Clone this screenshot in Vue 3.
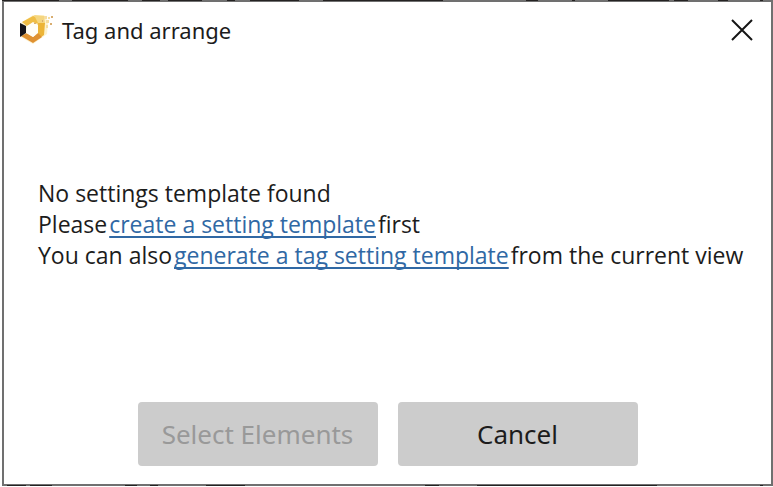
<script setup>
import { ref } from 'vue'

const open = ref(true)
const close = () => {
  open.value = false
}
</script>

<template>
  <section v-if="open" class="frame" role="dialog" aria-labelledby="dialog-title">
    <div class="dialog">
      <header class="titlebar">
        <svg class="logo" viewBox="0 0 36 32" aria-hidden="true">
          <path d="M1 9 L13 1 L24 1 L28 8 L27 20 L13 30 L1 23 Z" fill="#fbe9ae" opacity=".6" />
          <path d="M2 8 L13 2 L20 4 L21 10 L13 9 L7 12 Z" fill="#efbd45" />
          <path d="M14 1 L24 2 L25 9 L18 9 Z" fill="#f5d680" />
          <path d="M18 9 L25 9 L24 21 L18 25 L15 20 Z" fill="#ecb437" />
          <path d="M1 22 L7 19 L13 23 L18 19 L22 23 L13 29 Z" fill="#df9132" />
          <path d="M7 12 L13 8 L18 11 L18 19 L13 23 L6 19 Z" fill="#fffdf6" />
          <path d="M0 9 L6 12 L6 19 L0 23 Z" fill="#17151b" />
          <path d="M24 2h3v3h-3z M26 6h3v3h-3z M28 3h2v2h-2z M26 11h2v3h-2z" fill="#f6dda0" />
          <path d="M31 2h2v2h-2z M30 9h2v2h-2z M22 6h1v2h-1z M14 9h2v1h-2z" fill="#d8ad70" />
        </svg>
        <h1 id="dialog-title" class="title">Tag and arrange</h1>
        <button class="close" type="button" aria-label="Close" @click="close">
          <svg viewBox="0 0 22 22" aria-hidden="true">
            <path d="M1 1 L21 21 M21 1 L1 21" fill="none" stroke="#151515" stroke-width="2" />
          </svg>
        </button>
      </header>

      <main class="message">
        <p>No settings template found</p>
        <p>Please <a href="#create">create a setting template</a> first</p>
        <p>You can also <a href="#generate">generate a tag setting template</a> from the current view</p>
      </main>

      <footer class="actions">
        <button class="action" type="button" disabled>Select Elements</button>
        <button class="action" type="button" @click="close">Cancel</button>
      </footer>
    </div>
  </section>
</template>

<style>
body {
  background: #fff;
}
</style>

<style scoped>
.frame {
  box-sizing: border-box;
  display: flex;
  min-height: 100vh;
  padding: 0 0 1px 2px;
  font-family: "Noto Sans", "Open Sans", sans-serif;
  color: #1c1c1c;
}

.dialog {
  --edge: #707070;
  --ink: #242222;
  box-sizing: border-box;
  flex: 1;
  display: flex;
  flex-direction: column;
  padding: 2px;
  background:
    linear-gradient(90deg, var(--ink) 0 57px, transparent 0 70px, var(--ink) 0 126px, transparent 0 140px, var(--ink) 0 158px, transparent 0 166px, var(--ink) 0 200px, transparent 0 225px, var(--ink) 0 233px, transparent 0 248px, var(--ink) 0 297px, transparent 0 321px, var(--ink) 0 441px, transparent 0 524px, var(--ink) 0 536px, transparent 0 570px, var(--ink) 0 573px, transparent 0 606px, var(--ink) 0 667px, transparent 0 672px, var(--ink) 0 686px, transparent 0 716px, var(--ink) 0 726px, transparent 0 758px, var(--ink) 0 761px, transparent 0) top / 100% 1px no-repeat,
    linear-gradient(90deg, transparent 0 5px, var(--ink) 0 24px, transparent 0 28px, var(--ink) 0 50px, transparent 0 123px, var(--ink) 0 135px, transparent 0 148px, var(--ink) 0 156px, transparent 0 204px, var(--ink) 0 243px, transparent 0 423px, var(--ink) 0 437px, transparent 0 475px, var(--ink) 0 655px, transparent 0 758px, var(--ink) 0 761px, transparent 0) bottom / 100% 1px no-repeat,
    linear-gradient(#fff, #fff) center / calc(100% - 4px) calc(100% - 4px) no-repeat,
    var(--edge);
}

.titlebar {
  display: flex;
  align-items: center;
  height: 56px;
  padding: 0 18px 0 16px;
}

.logo {
  flex: none;
  width: 36px;
  height: 32px;
}

.title {
  flex: 1;
  margin: 0 0 0 6px;
  font-size: 22px;
  font-weight: 400;
  line-height: 32px;
}

.close {
  display: flex;
  padding: 0;
  border: 0;
  background: transparent;
  cursor: pointer;
}

.close svg {
  width: 22px;
  height: 22px;
}

.message {
  flex: 1;
  display: flex;
  flex-direction: column;
  justify-content: center;
  padding: 0 24px 12px 34px;
  font-family: "Open Sans", "Noto Sans", sans-serif;
  font-size: 23px;
  line-height: 31px;
}

.message p {
  margin: 0;
  white-space: nowrap;
}

.message a {
  margin: 0 -4px;
  color: #3068a4;
  text-decoration: underline;
  text-decoration-thickness: 2px;
  text-underline-offset: 3px;
  text-decoration-skip-ink: none;
}

.actions {
  display: flex;
  justify-content: center;
  gap: 20px;
  padding: 0 0 18px;
}

.action {
  width: 240px;
  height: 64px;
  padding: 0;
  border: 0;
  border-radius: 4px;
  background: #ccc;
  color: #1c1c1c;
  font: inherit;
  font-size: 26px;
  cursor: pointer;
}

.action:disabled {
  color: #999;
  cursor: default;
}
</style>
